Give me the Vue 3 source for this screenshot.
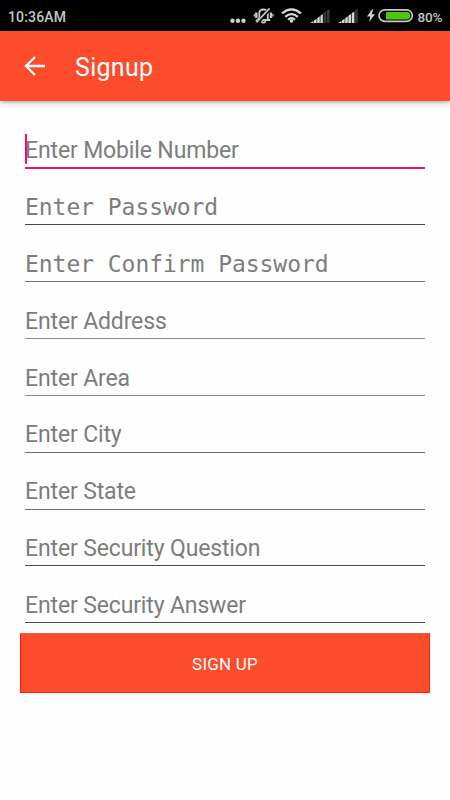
<script setup>
import { ref } from 'vue'

const fields = ref([
  { label: 'Enter Mobile Number', focused: true },
  { label: 'Enter Password', mono: true, tone: 'dark' },
  { label: 'Enter Confirm Password', mono: true, tone: 'mid' },
  { label: 'Enter Address', tone: 'light' },
  { label: 'Enter Area', tone: 'light' },
  { label: 'Enter City', tone: 'mid' },
  { label: 'Enter State', tone: 'mid' },
  { label: 'Enter Security Question', tone: 'dark' },
  { label: 'Enter Security Answer', tone: 'dark' },
])
</script>

<template>
  <div class="screen">
    <div class="status">
      <span class="time">10:36AM</span>
      <svg class="icons" width="190" height="31" viewBox="225 0 190 31">
        <g fill="#cfcfcf">
          <circle cx="232.5" cy="20.7" r="2.2" />
          <circle cx="238" cy="20.7" r="2.2" />
          <circle cx="243.5" cy="20.7" r="2.2" />
        </g>
        <g fill="none" stroke="#c8c8c8" stroke-width="1.8">
          <path d="M259.3 19V13.5Q259.3 9.5 263.5 9.5T267.8 13.5V18.8L270 20H257.2L259.3 18" />
          <path d="M256.3 12.5V18M271 12.5V18" stroke-width="2.4" />
          <path d="M254.3 14V16.5M273 14V16.5" stroke-width="1.2" />
          <path d="M261.2 21.3Q263.5 24 265.8 21.3" />
          <path d="M257.6 22.6L270 8.3" stroke="#000" stroke-width="3.6" />
          <path d="M256.5 22.3L269.5 8.3" stroke-width="1.7" />
        </g>
        <g fill="none" stroke="#dadada" stroke-width="2.2">
          <path d="M282 13.4Q291.5 5.4 301 13.4" />
          <path d="M285.2 16.8Q291.5 11.4 297.8 16.8" />
          <path d="M288 19.8Q291.5 16.6 295 19.8" />
        </g>
        <circle cx="291.5" cy="21" r="1.8" fill="#dadada" />
        <path d="M310 23L313.5 21V23ZM314 20.5L316.6 18.7V23H314ZM317.2 18.2L319.8 16.2V23H317.2ZM320.4 15.7L322.8 13.9V23H320.4Z" fill="#d8d8d8" />
        <path d="M323.5 13L326.2 11.3V23H323.5ZM326.9 10.6L329.6 9V23H326.9Z" fill="#383838" />
        <path d="M338 23L341.5 21V23ZM342 20.5L344.6 18.7V23H342ZM345.2 18.2L347.8 16.2V23H345.2ZM348.4 15.7L351 13.9V23H348.4ZM351.7 13.2L354.4 11.4V23H351.7Z" fill="#d8d8d8" />
        <path d="M355.2 10.6L357.8 9V23H355.2Z" fill="#383838" />
        <path d="M372 9.5L367 16.5H370.3L369 22L375 14.3H371.6L373.3 9.5Z" fill="#d0d0d0" />
        <rect x="379" y="9.8" width="33.3" height="11.6" rx="5.8" fill="#000" stroke="#c5c5c5" stroke-width="1.7" />
        <path d="M386 12H407.2Q410.3 12.3 410.3 15.6T407.2 19.5H386Z" fill="#4bc80b" />
      </svg>
      <span class="percent">80%</span>
    </div>

    <header class="toolbar">
      <svg class="back" width="22" height="22" viewBox="0 0 22 22">
        <path d="M21 11H2.5M11 2L2 11L11 20" fill="none" stroke="#fff" stroke-width="2.3" />
      </svg>
      <h1>Signup</h1>
    </header>

    <form class="form" @submit.prevent>
      <div
        v-for="field in fields"
        :key="field.label"
        class="field"
        :class="[field.tone, { focused: field.focused, mono: field.mono }]"
      >
        <i v-if="field.focused" class="caret"></i>
        <span class="hint">{{ field.label }}</span>
      </div>
      <button class="submit" type="submit">SIGN UP</button>
    </form>
  </div>
</template>

<style>
body {
  background: #fff;
}
</style>

<style scoped>
.screen {
  width: 450px;
  height: 800px;
  overflow: hidden;
  background: #fefefe;
  font-family: Roboto, "Liberation Sans", sans-serif;
}
.status {
  display: flex;
  align-items: center;
  height: 31px;
  box-sizing: border-box;
  padding: 2px 0 0 8px;
  background: #000;
  color: #c4c4c4;
  font-size: 14px;
  font-weight: 500;
}
.time {
  width: 217px;
  letter-spacing: 0.15px;
}
.icons {
  flex: none;
  position: relative;
  top: -1px;
}
.percent {
  margin-left: 2.5px;
  font-size: 13.5px;
  letter-spacing: -0.2px;
}
.toolbar {
  position: relative;
  display: flex;
  align-items: center;
  height: 70px;
  box-sizing: border-box;
  padding-left: 24px;
  background: #fc4c2b;
  box-shadow: 0 1px 5px rgba(0, 0, 0, 0.4);
}
.back {
  flex: none;
}
h1 {
  margin: 4px 0 0 29px;
  color: #fff;
  font-size: 25px;
  font-weight: 400;
  line-height: 30px;
  letter-spacing: 0.3px;
}
.form {
  padding: 32px 20px 0;
}
.field {
  position: relative;
  display: flex;
  align-items: flex-start;
  height: 56.85px;
  box-sizing: border-box;
  margin: 0 5px;
  padding-top: 3.2px;
  color: #7d7d7d;
  font-size: 23px;
  line-height: 30px;
  letter-spacing: -0.14px;
}
.field::after {
  content: "";
  position: absolute;
  left: 0;
  right: 0;
  top: 34.5px;
  height: 1px;
  background: #484848;
}
.mono {
  padding-top: 2.2px;
  letter-spacing: -0.05px;
  font-family: "DejaVu Sans Mono", "Liberation Mono", monospace;
}
.mid::after {
  background: #6c6c6c;
}
.light::after {
  background: #8c8c8c;
}
.focused::after {
  top: 34px;
  height: 2px;
  background: #f90b78;
}
.caret {
  position: absolute;
  left: 0;
  top: 1px;
  width: 2px;
  height: 30px;
  background: #ff0874;
}
.submit {
  display: block;
  width: 410px;
  height: 60px;
  margin-top: -12px;
  padding: 2px 0 0;
  border: 1px solid #ff1d0b;
  border-top-color: #f85a45;
  background: #fc4c2b;
  color: #fff;
  font-family: inherit;
  font-size: 17px;
  letter-spacing: 0.2px;
}
</style>
